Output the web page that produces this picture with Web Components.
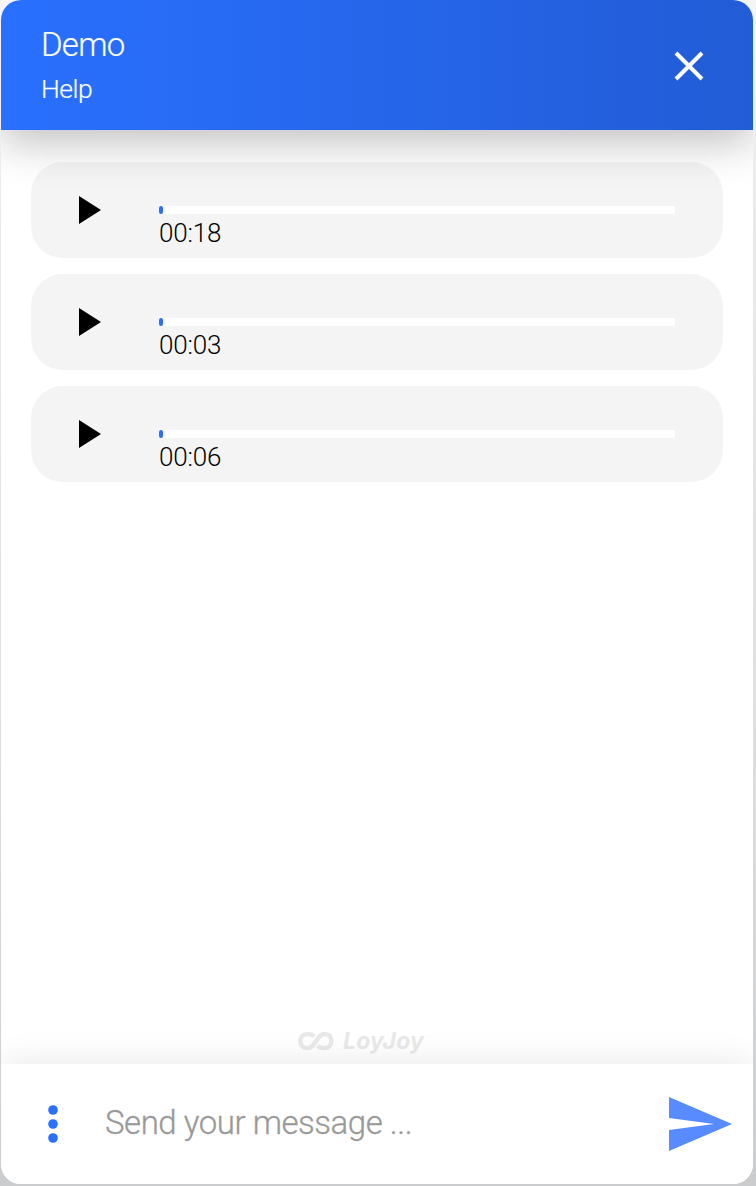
<!DOCTYPE html>
<html lang="en">
<head>
<meta charset="utf-8">
<title>Demo chat</title>
<style>
html,body{margin:0;height:100%}
body{font-family:Roboto,"Liberation Sans",sans-serif;font-weight:300;overflow:hidden;background:linear-gradient(#f5f5f6,#e9e9e9 20%,#dfdfe0 60%,#cbcccd)}
</style>
</head>
<body>
<chat-window>
  <chat-header slot="header" heading="Demo" sub="Help"></chat-header>
  <audio-message time="00:18"></audio-message>
  <audio-message time="00:03"></audio-message>
  <audio-message time="00:06"></audio-message>
  <brand-mark slot="brand">LoyJoy</brand-mark>
  <chat-composer slot="footer">Send your message ...</chat-composer>
</chat-window>
<script>
const define = (name, html, setup) => customElements.define(name, class extends HTMLElement {
  constructor() {
    super();
    this.attachShadow({mode: 'open'}).innerHTML = html;
  }
  connectedCallback() { if (setup) setup(this, this.shadowRoot); }
});

define('chat-window', `<style>
:host{display:flex;flex-direction:column;box-sizing:border-box;width:752px;height:1184px;margin-left:1px;border-radius:20px;overflow:hidden;background:#fff}
main{flex:1;display:flex;flex-direction:column;gap:16px;padding:32px 30px 0}
.brand{margin-top:auto}
</style>
<slot name="header"></slot><main><slot></slot><div class="brand"><slot name="brand"></slot></div></main><slot name="footer"></slot>`);

define('chat-header', `<style>
:host{display:flex;box-sizing:border-box;height:130px;flex:none;position:relative;z-index:1;justify-content:space-between;align-items:center;padding:2px 40px 0;color:#fff;background:linear-gradient(90deg,#2970ff,#225cd6);box-shadow:0 12px 40px rgba(0,0,0,.25)}
.t{font-size:33px;line-height:42px;letter-spacing:-.75px;padding-top:4px}
.s{font-size:26.5px;line-height:46px;letter-spacing:-.5px}
.t,.s{-webkit-text-stroke:.2px #fff}
svg{display:block;width:48px;height:48px}
</style>
<div><div class="t"></div><div class="s"></div></div>
<svg viewBox="0 0 48 48"><path d="M11 11L37 37M37 11L11 37" stroke="#fff" stroke-width="4" fill="none"/></svg>`,
(el, root) => {
  root.querySelector('.t').textContent = el.getAttribute('heading');
  root.querySelector('.s').textContent = el.getAttribute('sub');
});

define('audio-message', `<style>
:host{display:flex;box-sizing:border-box;width:692px;height:96px;border-radius:32px;background:#f4f4f4;padding:0 48px;color:#000}
svg{width:22px;height:28px;margin:34px 58px 0 0;flex:none}
.track{flex:1;padding-top:44px}
.bar{height:8px;border-radius:2px;background:#fff}
.pos{width:4px;height:8px;border-radius:2px;background:#2970ff}
.time{font-size:26px;line-height:30px;margin-top:4px;letter-spacing:-.2px}
</style>
<svg viewBox="0 0 22 28"><path d="M0 0V28L22 14Z"/></svg>
<div class="track"><div class="bar"><div class="pos"></div></div><div class="time"></div></div>`,
(el, root) => { root.querySelector('.time').textContent = el.getAttribute('time'); });

define('brand-mark', `<style>
:host{display:flex;height:37px;padding-left:267px;color:#e9e9e9;font:italic 700 23px/28px Inter,sans-serif;letter-spacing:.15px}
svg{width:36px;height:20px;margin:4px 9px 0 0}
</style>
<svg viewBox="0 0 36 20"><path d="M16.3 5.2C14.6 3.4 12.2 2.9 9.5 2.9C5.4 2.9 2.3 5.7 2.3 10S5.3 17.1 9.3 17.1C13.6 17.1 15.4 14.2 18 10S22.6 2.9 26.6 2.9C30.7 2.9 33.3 5.8 33.3 10S30.7 17.1 26.6 17.1C23.8 17.1 21.2 16.6 19.5 14.8" fill="none" stroke="#e9e9e9" stroke-width="4.5"/></svg><span><slot></slot></span>`);

define('chat-composer', `<style>
:host{display:flex;box-sizing:border-box;height:120px;flex:none;position:relative;align-items:center;padding:0 21px 0 47px;background:#fff;box-shadow:0 0 32px rgba(0,0,0,.1);color:#999;font-size:33px;line-height:40px}
.dots{width:10px;height:38px;margin-right:47px;fill:#2970ff}
.send{width:63px;height:54px;margin-left:auto;fill:#578bff}
span{padding-bottom:3px;letter-spacing:-.47px;-webkit-text-stroke:.3px #999}
</style>
<svg class="dots" viewBox="0 0 10 38"><circle cx="5" cy="5" r="4.8"/><circle cx="5" cy="19" r="4.8"/><circle cx="5" cy="33" r="4.8"/></svg>
<span><slot></slot></span>
<svg class="send" viewBox="0 0 63 54"><path d="M0 0L63 27L0 54V33L45 27L0 21Z"/></svg>`);
</script>
</body>
</html>
